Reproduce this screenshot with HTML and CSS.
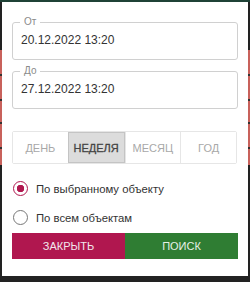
FILE: index.html
```html
<!DOCTYPE html>
<html lang="ru">
<head>
    <meta charset="UTF-8">
    <title>Период</title>
    <link rel="stylesheet" href="styles.css">
</head>
<body>
    <div class="dialog">
        <fieldset class="field">
            <legend>От</legend>
            <div class="value">20.12.2022 13:20</div>
        </fieldset>
        <fieldset class="field">
            <legend>До</legend>
            <div class="value">27.12.2022 13:20</div>
        </fieldset>

        <div class="periods">
            <button class="period">День</button>
            <button class="period active">Неделя</button>
            <button class="period">Месяц</button>
            <button class="period">Год</button>
        </div>

        <label class="radio">
            <span class="dot checked"></span>
            По выбранному объекту
        </label>
        <label class="radio">
            <span class="dot"></span>
            По всем объектам
        </label>

        <div class="actions">
            <button class="action close">Закрыть</button>
            <button class="action search">Поиск</button>
        </div>
    </div>
</body>
</html>
```

FILE: styles.css
```css
body {
    margin: 0;
    height: 282px;
    font-family: 'Liberation Sans', Arial, sans-serif;
    background: linear-gradient(to bottom,
        #1f4236 0, #1f4236 2px,
        #222 2px, #222 50px,
        #c8615b 50px, #c8615b 74px,
        #333 74px, #333 76px,
        #c8615b 76px, #c8615b 99px,
        #333 99px, #333 101px,
        #c8615b 101px, #c8615b 122px,
        #333 122px, #333 124px,
        #c8615b 124px, #c8615b 147px,
        #333 147px, #333 149px,
        #c8615b 149px, #c8615b 165px,
        #222 165px);
    overflow: hidden;
}

.dialog {
    box-sizing: border-box;
    width: 246px;
    height: 274px;
    margin: 2px 0 0 2px;
    padding: 14px 10px 0;
    background-color: #fff;
}

/* legend half sits above the border, so the box is 6px taller */
.field {
    margin: 0 0 5px;
    padding: 0 8px;
    height: 44px;
    box-sizing: border-box;
    border: 1px solid #d0d0d0;
    border-radius: 3px;
}

.field legend {
    padding: 0 4px;
    margin-left: -1px;
    font-size: 10px;
    line-height: 12px;
    color: #8a8a8a;
}

.value {
    font-size: 12px;
    line-height: 14px;
    color: #333;
    margin-top: 5px;
}

.periods {
    display: flex;
    margin: 22px 1px 0 0;
    height: 33px;
    box-sizing: border-box;
    border: 1px solid #e6e6e6;
    border-radius: 2px;
}

.period {
    flex: 1;
    border: none;
    border-left: 1px solid #e6e6e6;
    background: #fff;
    font-family: inherit;
    font-size: 11px;
    text-transform: uppercase;
    color: #a8a8a8;
    padding: 0;
}

.period:first-child {
    border-left: none;
}

.period.active {
    background-color: #dcdcdc;
    border: 1px solid #c4c4c4;
    color: #444;
    -webkit-text-stroke: 0.3px #444;
}

.radio {
    display: flex;
    align-items: center;
    gap: 8px;
    height: 29px;
    padding-left: 1px;
    font-size: 11.3px;
    color: #333;
}

.radio:first-of-type {
    margin-top: 10px;
}

.dot {
    box-sizing: border-box;
    width: 15px;
    height: 15px;
    border: 1.5px solid #777;
    border-radius: 50%;
}

.dot.checked {
    border-color: #b0184f;
    background: radial-gradient(circle, #b0184f 0, #b0184f 3.5px, transparent 4px);
}

.actions {
    display: flex;
    margin-top: 1px;
}

.action {
    flex: 1;
    height: 26px;
    border: none;
    padding: 0;
    font-family: inherit;
    font-size: 11px;
    text-transform: uppercase;
    color: #f2e6ec;
}

.close {
    background-color: #b0174f;
}

.search {
    background-color: #2f7d33;
    color: #e6f0e6;
}
```
